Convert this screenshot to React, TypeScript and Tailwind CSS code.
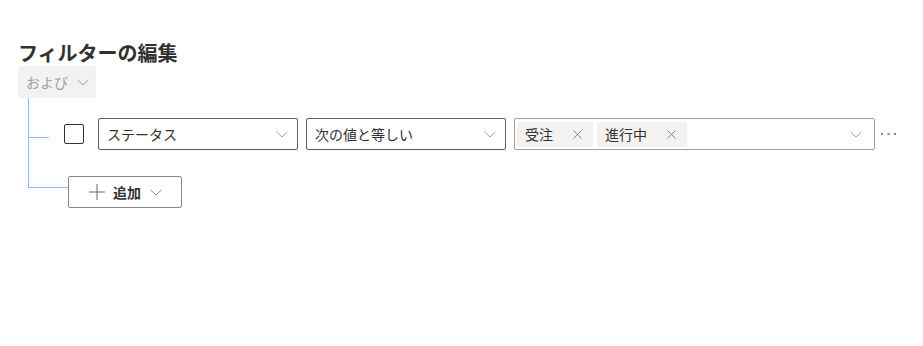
import { useState } from "react"

const font = { fontFamily: '"Noto Sans CJK JP", "Noto Sans", sans-serif' }

function Chevron({ className = "" }: { className?: string }) {
  return (
    <svg width="12" height="7" viewBox="0 0 12 7" className={className} fill="none">
      <path d="M0.5 0.8 L6 6 L11.5 0.8" stroke="currentColor" strokeWidth="1" />
    </svg>
  )
}

function Cross() {
  return (
    <svg width="9" height="9" viewBox="0 0 9 9" fill="none" className="text-[#8a8886]">
      <path d="M0.5 0.5 L8.5 8.5 M8.5 0.5 L0.5 8.5" stroke="currentColor" strokeWidth="1" />
    </svg>
  )
}

function Select({ label }: { label: string }) {
  return (
    <div className="flex h-8 w-[200px] items-center justify-between rounded-[2px] border border-[#605e5c] bg-white pl-2 pr-[9px] text-sm text-[#323130]">
      <span>{label}</span>
      <Chevron className="text-[#a19f9d]" />
    </div>
  )
}

function Tag({ label }: { label: string }) {
  return (
    <div className="flex h-[25px] items-center rounded-[2px] bg-[#f3f2f1] pl-2 pr-[11px] text-sm text-[#323130]">
      <span>{label}</span>
      <span className="ml-[20px] flex">
        <Cross />
      </span>
    </div>
  )
}

export default function App() {
  const [checked, setChecked] = useState(false)
  const values = ["受注", "進行中"]

  return (
    <div className="h-[346px] w-[923px] bg-white pl-[18px] text-[#323130]" style={font}>
      <h2 className="pt-[39px] text-[20px] font-bold leading-[27px]">フィルターの編集</h2>

      <div className="flex h-8 w-[78px] items-center rounded-[2px] bg-[#f3f2f1] pl-2 text-sm text-[#a19f9d]">
        <span>および</span>
        <Chevron className="ml-[9px]" />
      </div>

      <div className="ml-[10px] flex flex-col">
        <div className="h-5 border-l border-[#94b8f5]" />

        <div className="flex h-8 items-center">
          <div className="w-[21px] self-stretch border-l border-[#94b8f5]">
            <div className="h-5 border-b border-[#94b8f5]" />
          </div>
          <button
            onClick={() => setChecked(!checked)}
            className="ml-[15px] h-5 w-5 rounded-[2px] border border-[#323130] bg-white"
          />
          <div className="ml-[14px] flex items-center gap-2">
            <Select label="ステータス" />
            <Select label="次の値と等しい" />
            <div className="flex h-8 w-[361px] items-center justify-between rounded-[2px] border border-[#a19f9d] bg-white pl-[2px] pr-3">
              <div className="flex items-center gap-1">
                {values.map(v => (
                  <Tag key={v} label={v} />
                ))}
              </div>
              <Chevron className="text-[#a19f9d]" />
            </div>
          </div>
          <svg width="16" height="4" viewBox="0 0 16 4" className="ml-[6px] text-[#a173b3]">
            <rect x="0" y="1" width="2" height="2" fill="currentColor" />
            <rect x="6.5" y="1" width="2" height="2" fill="currentColor" />
            <rect x="13" y="1" width="2" height="2" fill="currentColor" />
          </svg>
        </div>

        <div className="h-[26px] border-l border-[#94b8f5]" />

        <div className="flex">
          <div className="h-3 w-10 border-b border-l border-[#94b8f5]" />
          <button className="flex h-8 w-[114px] items-center rounded-[2px] border border-[#8a8886] bg-white pl-[20px] text-sm font-bold text-[#323130]">
            <svg width="16" height="16" viewBox="0 0 16 16" fill="none" className="text-[#6b6b6b]">
              <path d="M8 0 V16 M0 8 H16" stroke="currentColor" strokeWidth="1" />
            </svg>
            <span className="ml-2">追加</span>
            <Chevron className="ml-[9px] text-[#8a8886]" />
          </button>
        </div>
      </div>
    </div>
  )
}
